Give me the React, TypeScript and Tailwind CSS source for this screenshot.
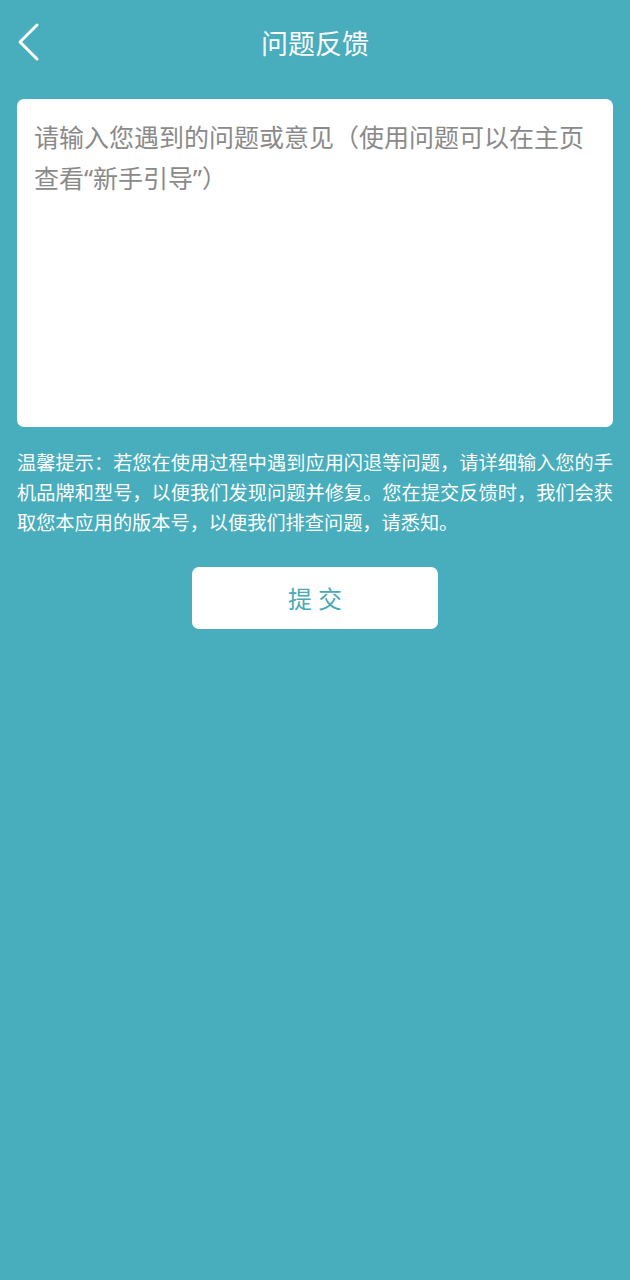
import React from "react";

export default function App() {
  const q = (c: string) => (
    <span style={{ fontFamily: '"Noto Sans", sans-serif' }}>{c}</span>
  );
  return (
    <div
      className="w-[630px] h-[1280px] bg-[#48adbc] flex flex-col"
      style={{ fontFamily: '"Noto Sans CJK SC", "Noto Sans", sans-serif' }}
    >
      <div className="relative h-[84px] flex items-center justify-center">
        <svg
          className="absolute left-[16px] top-[22px]"
          width="26"
          height="40"
          viewBox="0 0 26 40"
          fill="none"
        >
          <path d="M21 3 L4 20 L21 37" stroke="white" strokeWidth="3" strokeLinecap="round" strokeLinejoin="round" />
        </svg>
        <div className="text-white text-[27px] leading-none">问题反馈</div>
      </div>
      <div className="mx-[17px] mt-[15px] h-[328px] bg-white rounded-[7px] pl-[17px] pr-[18px] pt-[17px]">
        <div className="text-[#8a8a8a] text-[25px] leading-[41px]">
          请输入您遇到的问题或意见（使用问题可以在主页查看{q("“")}新手引导{q("”")}）
        </div>
      </div>
      <div className="mx-[17px] mt-[20px] text-white text-[19.2px] leading-[30px] whitespace-nowrap">
        <div className="text-justify [text-align-last:justify]">温馨提示：若您在使用过程中遇到应用闪退等问题，请详细输入您的手</div>
        <div className="text-justify [text-align-last:justify]">机品牌和型号，以便我们发现问题并修复。您在提交反馈时，我们会获</div>
        <div>取您本应用的版本号，以便我们排查问题，请悉知。</div>
      </div>
      <div className="mt-[30px] flex justify-center">
        <div className="w-[246px] h-[62px] bg-white rounded-[7px] flex items-center justify-center text-[#48a9b8] text-[24px] tracking-[6px] pl-[6px]">
          提交
        </div>
      </div>
    </div>
  );
}
